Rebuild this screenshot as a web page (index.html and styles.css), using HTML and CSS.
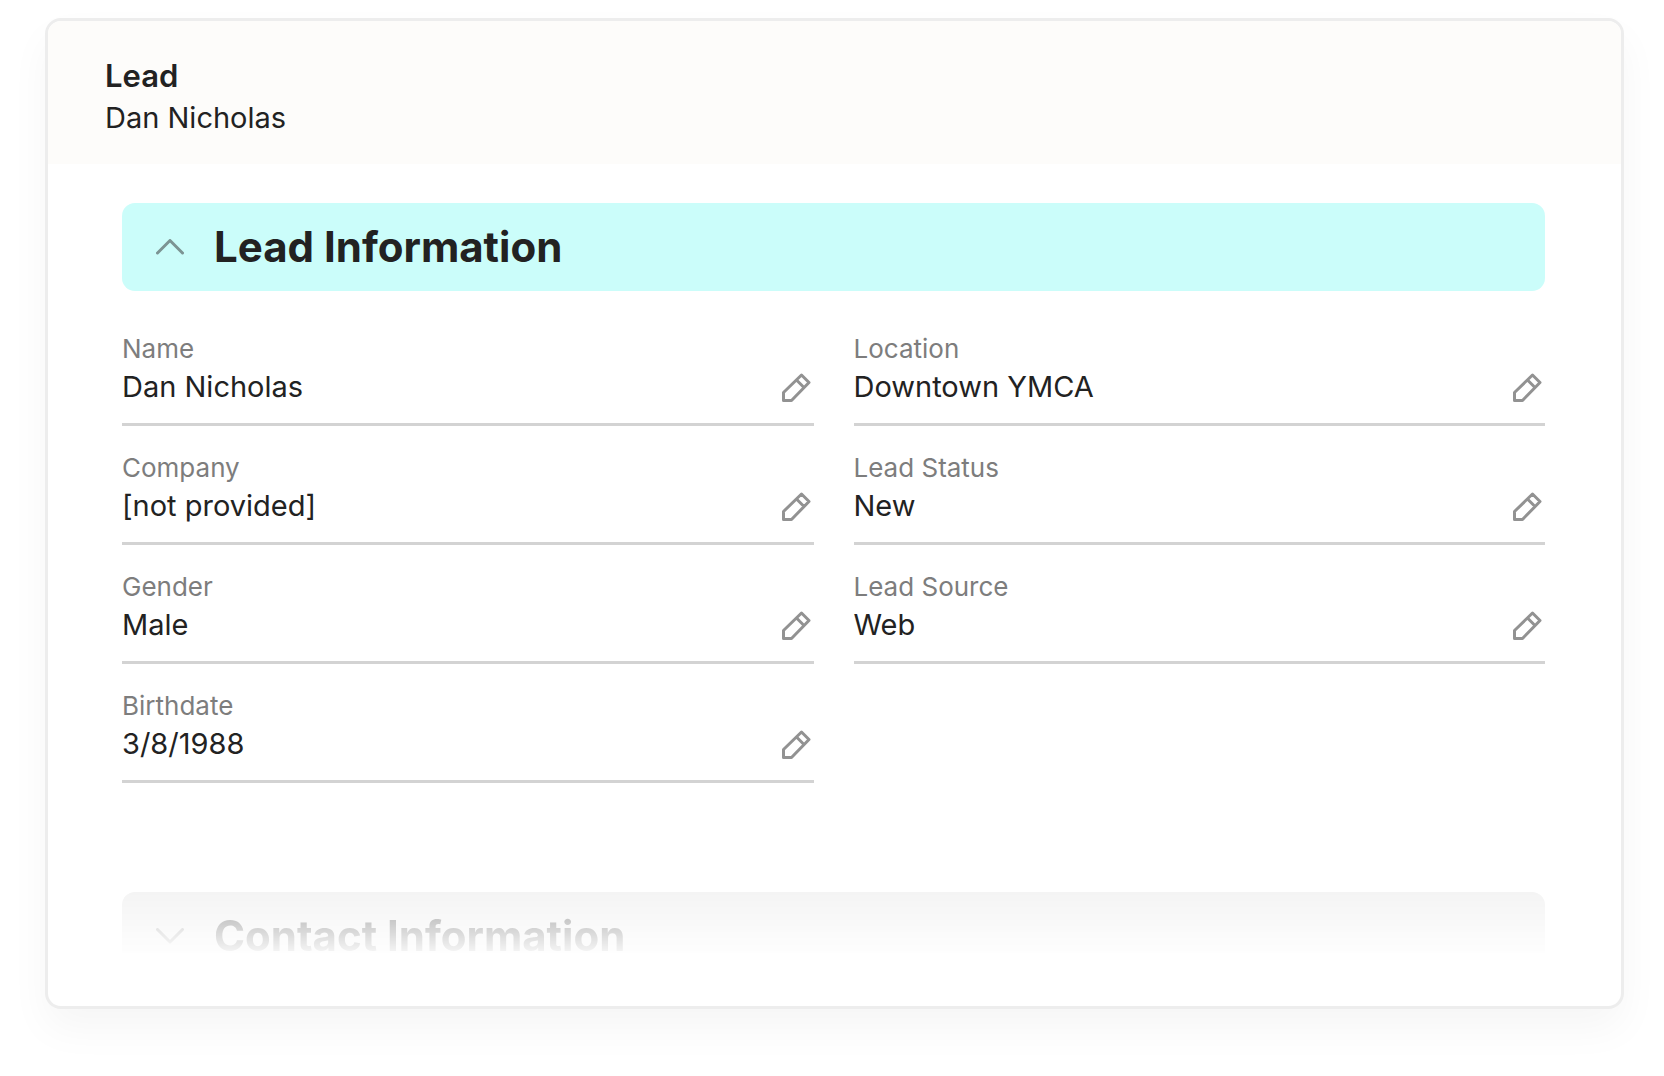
FILE: index.html
```html
<!doctype html>
<html lang="en-us">
<head>
    <meta charset="utf-8">
    <title>Lead - Dan Nicholas</title>
    <link rel="stylesheet" href="styles.css">
</head>
<body>
    <!-- shared icons -->
    <svg class="sprite" aria-hidden="true">
        <symbol id="pencil" viewBox="0 0 29 29">
            <path d="M1.5 27.5V19.5L19.5 2L27 9.5L9.5 27.5ZM14.5 7L22 14.5" />
        </symbol>
        <symbol id="chevron-up" viewBox="0 0 28 16">
            <path d="M1.5 14L14 1.5L26.5 14" />
        </symbol>
        <symbol id="chevron-down" viewBox="0 0 28 16">
            <path d="M1.5 1.5L14 14L26.5 1.5" />
        </symbol>
    </svg>

    <main class="card">
        <header class="card-header">
            <h1 class="record-type">Lead</h1>
            <p class="record-name">Dan Nicholas</p>
        </header>

        <div class="card-body">
            <section class="section">
                <h2 class="section-heading">
                    <button class="section-toggle open" type="button" aria-expanded="true" aria-controls="lead-fields">
                        <svg class="chevron" aria-hidden="true"><use href="#chevron-up" /></svg>
                        Lead Information
                    </button>
                </h2>

                <div class="fields" id="lead-fields">
                    <div class="column">
                        <div class="field">
                            <div class="field-label">Name</div>
                            <div class="field-value">Dan Nicholas</div>
                            <button class="edit" type="button" aria-label="Edit Name"><svg><use href="#pencil" /></svg></button>
                        </div>
                        <div class="field">
                            <div class="field-label">Company</div>
                            <div class="field-value">[not provided]</div>
                            <button class="edit" type="button" aria-label="Edit Company"><svg><use href="#pencil" /></svg></button>
                        </div>
                        <div class="field">
                            <div class="field-label">Gender</div>
                            <div class="field-value">Male</div>
                            <button class="edit" type="button" aria-label="Edit Gender"><svg><use href="#pencil" /></svg></button>
                        </div>
                        <div class="field">
                            <div class="field-label">Birthdate</div>
                            <div class="field-value">3/8/1988</div>
                            <button class="edit" type="button" aria-label="Edit Birthdate"><svg><use href="#pencil" /></svg></button>
                        </div>
                    </div>

                    <div class="column">
                        <div class="field">
                            <div class="field-label">Location</div>
                            <div class="field-value">Downtown YMCA</div>
                            <button class="edit" type="button" aria-label="Edit Location"><svg><use href="#pencil" /></svg></button>
                        </div>
                        <div class="field">
                            <div class="field-label">Lead Status</div>
                            <div class="field-value">New</div>
                            <button class="edit" type="button" aria-label="Edit Lead Status"><svg><use href="#pencil" /></svg></button>
                        </div>
                        <div class="field">
                            <div class="field-label">Lead Source</div>
                            <div class="field-value">Web</div>
                            <button class="edit" type="button" aria-label="Edit Lead Source"><svg><use href="#pencil" /></svg></button>
                        </div>
                    </div>
                </div>
            </section>

            <section class="section faded">
                <h2 class="section-heading">
                    <button class="section-toggle" type="button" aria-expanded="false">
                        <svg class="chevron" aria-hidden="true"><use href="#chevron-down" /></svg>
                        Contact Information
                    </button>
                </h2>
            </section>
        </div>
    </main>
</body>
</html>
```

FILE: styles.css
```css
* {
    box-sizing: border-box;
}

body {
    font-family: Inter, "Liberation Sans", sans-serif;
    margin: 0;
    padding: 18px 40px 66px 45px;
    background-color: #fff;
    color: #222;
}

h1,
h2,
p {
    margin: 0;
}

button {
    font-family: inherit;
    color: inherit;
    border: none;
    background: none;
    cursor: pointer;
}

.sprite {
    display: none;
}

/* Card */
.card {
    border: 3px solid rgba(0, 0, 0, 0.07);
    border-radius: 16px;
    background-color: #fff;
    box-shadow: 0 20px 40px rgba(0, 0, 0, 0.04);
}

.card-header {
    padding: 37px 57px 28px;
    border-radius: 13px 13px 0 0;
    background-color: #fdfcfa;
}

.record-type {
    margin-bottom: 6px;
    font-size: 31px;
    line-height: 36px;
    font-weight: 600;
}

.record-name {
    font-size: 29px;
    line-height: 36px;
}

.card-body {
    padding: 39px 76px 26px 74px;
}

/* Collapsible sections */
.section-heading {
    font-size: 42px;
    line-height: 52px;
}

.section-toggle {
    display: flex;
    align-items: center;
    gap: 30px;
    width: 100%;
    padding: 18px 34px;
    border-radius: 13px;
    background-color: #f4f4f4;
    font-size: inherit;
    line-height: inherit;
    font-weight: 700;
    text-align: left;
}

.section-toggle.open {
    background-color: #cbfdfa;
}

.chevron {
    width: 28px;
    height: 16px;
    fill: none;
    stroke: #7c9493;
    stroke-width: 3;
    stroke-linecap: round;
    stroke-linejoin: round;
}

/* Fields */
.fields {
    display: flex;
    gap: 40px;
    padding: 16px 0 109px;
}

.column {
    flex: 1;
}

.field {
    display: grid;
    grid-template-columns: 1fr auto;
    row-gap: 2px;
    padding-top: 26px;
    padding-bottom: 16px;
    border-bottom: 3px solid #d3d3d3;
}

.field-label {
    grid-column: 1 / 3;
    font-size: 26px;
    line-height: 32px;
    color: #7d7d7d;
}

.field-value {
    font-size: 29px;
    line-height: 40px;
}

.edit {
    display: flex;
    align-items: center;
    padding: 0 3px;
}

.edit svg {
    width: 29px;
    height: 29px;
    fill: none;
    stroke: #929292;
    stroke-width: 3;
    stroke-linejoin: round;
}

/* Next section fades out at the bottom of the card */
.faded {
    -webkit-mask-image: linear-gradient(#000, rgba(0, 0, 0, 0.1) 61px, transparent 61px);
    mask-image: linear-gradient(#000, rgba(0, 0, 0, 0.1) 61px, transparent 61px);
}

.faded .section-toggle {
    color: #a2a2a2;
}

.faded .chevron {
    stroke: #c8c8c8;
}

@media (max-width: 800px) {
    .fields {
        flex-direction: column;
        gap: 0;
    }
}
```
